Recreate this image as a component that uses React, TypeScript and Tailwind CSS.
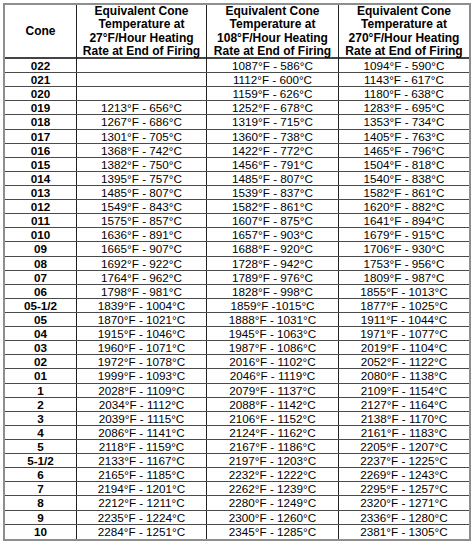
import React from "react";

const rows: [string, string, string, string][] = [
  ["022", "", "1087°F - 586°C", "1094°F - 590°C"],
  ["021", "", "1112°F - 600°C", "1143°F - 617°C"],
  ["020", "", "1159°F - 626°C", "1180°F - 638°C"],
  ["019", "1213°F - 656°C", "1252°F - 678°C", "1283°F - 695°C"],
  ["018", "1267°F - 686°C", "1319°F - 715°C", "1353°F - 734°C"],
  ["017", "1301°F - 705°C", "1360°F - 738°C", "1405°F - 763°C"],
  ["016", "1368°F - 742°C", "1422°F - 772°C", "1465°F - 796°C"],
  ["015", "1382°F - 750°C", "1456°F - 791°C", "1504°F - 818°C"],
  ["014", "1395°F - 757°C", "1485°F - 807°C", "1540°F - 838°C"],
  ["013", "1485°F - 807°C", "1539°F - 837°C", "1582°F - 861°C"],
  ["012", "1549°F - 843°C", "1582°F - 861°C", "1620°F - 882°C"],
  ["011", "1575°F - 857°C", "1607°F - 875°C", "1641°F - 894°C"],
  ["010", "1636°F - 891°C", "1657°F - 903°C", "1679°F - 915°C"],
  ["09", "1665°F - 907°C", "1688°F - 920°C", "1706°F - 930°C"],
  ["08", "1692°F - 922°C", "1728°F - 942°C", "1753°F - 956°C"],
  ["07", "1764°F - 962°C", "1789°F - 976°C", "1809°F - 987°C"],
  ["06", "1798°F - 981°C", "1828°F - 998°C", "1855°F - 1013°C"],
  ["05-1/2", "1839°F - 1004°C", "1859°F -1015°C", "1877°F - 1025°C"],
  ["05", "1870°F - 1021°C", "1888°F - 1031°C", "1911°F - 1044°C"],
  ["04", "1915°F - 1046°C", "1945°F - 1063°C", "1971°F - 1077°C"],
  ["03", "1960°F - 1071°C", "1987°F - 1086°C", "2019°F - 1104°C"],
  ["02", "1972°F - 1078°C", "2016°F - 1102°C", "2052°F - 1122°C"],
  ["01", "1999°F - 1093°C", "2046°F - 1119°C", "2080°F - 1138°C"],
  ["1", "2028°F - 1109°C", "2079°F - 1137°C", "2109°F - 1154°C"],
  ["2", "2034°F - 1112°C", "2088°F - 1142°C", "2127°F - 1164°C"],
  ["3", "2039°F - 1115°C", "2106°F - 1152°C", "2138°F - 1170°C"],
  ["4", "2086°F - 1141°C", "2124°F - 1162°C", "2161°F - 1183°C"],
  ["5", "2118°F - 1159°C", "2167°F - 1186°C", "2205°F - 1207°C"],
  ["5-1/2", "2133°F - 1167°C", "2197°F - 1203°C", "2237°F - 1225°C"],
  ["6", "2165°F - 1185°C", "2232°F - 1222°C", "2269°F - 1243°C"],
  ["7", "2194°F - 1201°C", "2262°F - 1239°C", "2295°F - 1257°C"],
  ["8", "2212°F - 1211°C", "2280°F - 1249°C", "2320°F - 1271°C"],
  ["9", "2235°F - 1224°C", "2300°F - 1260°C", "2336°F - 1280°C"],
  ["10", "2284°F - 1251°C", "2345°F - 1285°C", "2381°F - 1305°C"],
];

const headers = [
  ["Equivalent Cone", "Temperature at", "27°F/Hour Heating", "Rate at End of Firing"],
  ["Equivalent Cone", "Temperature at", "108°F/Hour Heating", "Rate at End of Firing"],
  ["Equivalent Cone", "Temperature at", "270°F/Hour Heating", "Rate at End of Firing"],
];

export default function App() {
  return (
    <div
      className="w-[474px] h-[544px] bg-white pl-[3px] pt-[3px] text-black"
      style={{ fontFamily: '"Liberation Sans", Arial, sans-serif' }}
    >
      <div className="w-[468px] border-2 border-[#8e8e8e]">
        <div className="grid grid-cols-[72px_130px_132px_1fr] h-[54px] border-b-2 border-[#444] font-bold text-[12px] leading-[13.4px]">
          <div className="flex items-center justify-center border-r border-[#222]">Cone</div>
          {headers.map((h, i) => (
            <div
              key={i}
              className={`flex flex-col items-center justify-center ${i < 2 ? "border-r border-[#222]" : ""}`}
            >
              {h.map((l, j) => (
                <span key={j} className="whitespace-nowrap">
                  {l}
                </span>
              ))}
            </div>
          ))}
        </div>
        {rows.map((r, i) => (
          <div
            key={i}
            className={`grid grid-cols-[72px_130px_132px_1fr] h-[14.12px] text-[11.7px] leading-[13px] ${
              i < rows.length - 1 ? "border-b border-[#4a4a4a]" : ""
            }`}
          >
            <div className="flex items-center justify-center border-r border-[#222] font-bold">{r[0]}</div>
            <div className="flex items-center justify-center border-r border-[#222] whitespace-nowrap">{r[1]}</div>
            <div className="flex items-center justify-center border-r border-[#222] whitespace-nowrap">{r[2]}</div>
            <div className="flex items-center justify-center whitespace-nowrap">{r[3]}</div>
          </div>
        ))}
      </div>
    </div>
  );
}
